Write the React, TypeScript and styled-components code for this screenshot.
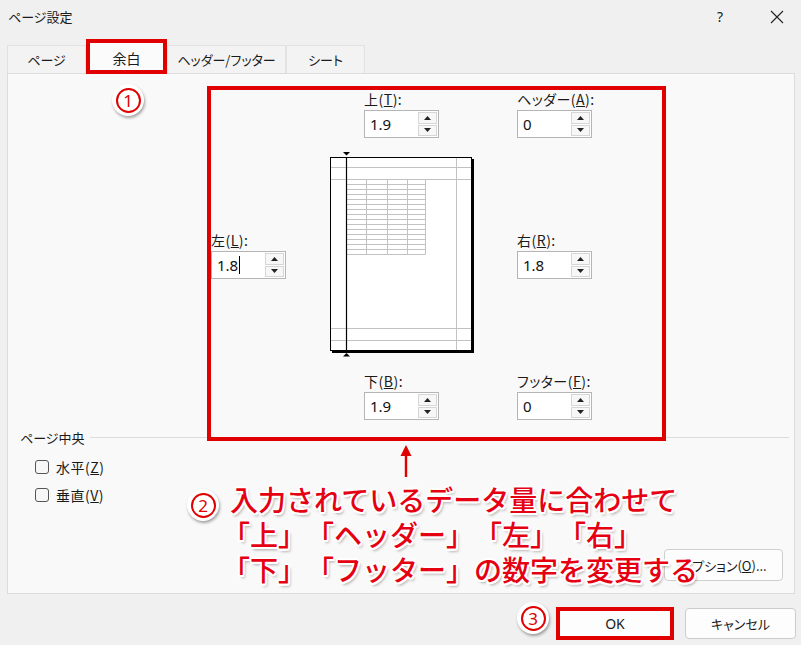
import React from "react";
import styled, { createGlobalStyle } from "styled-components";

const RED = "#e00000";

const GlobalStyle = createGlobalStyle`
  html, body {
    margin: 0;
    padding: 0;
    background: #f0f0f0;
  }
  body {
    font-family: "Noto Sans CJK JP", "Noto Sans", sans-serif;
    color: #1a1a1a;
  }
`;

const Dialog = styled.div`
  position: relative;
  width: 801px;
  height: 645px;
  background: #f0f0f0;
  display: flex;
  flex-direction: column;
  font-size: 13px;
  font-feature-settings: "palt";
  overflow: hidden;
`;

const TitleBar = styled.div`
  height: 33px;
  display: flex;
  align-items: center;
  padding-left: 8px;
`;

const Title = styled.span`
  flex: 1;
  font-size: 13px;
`;

const TitleButton = styled.div<{ $w: number }>`
  width: ${(p) => p.$w}px;
  height: 33px;
  display: flex;
  align-items: center;
  justify-content: center;
  font-family: "Noto Sans", sans-serif;
  font-size: 14px;
`;

const TabStrip = styled.div`
  height: 40px;
  display: flex;
  align-items: flex-end;
  padding-left: 7px;
  position: relative;
  z-index: 2;
`;

const Tab = styled.div<{ $w: number; $active?: boolean }>`
  box-sizing: border-box;
  width: ${(p) => p.$w}px;
  height: ${(p) => (p.$active ? 35 : 28)}px;
  margin-bottom: ${(p) => (p.$active ? -1 : 0)}px;
  display: flex;
  align-items: center;
  justify-content: center;
  padding-top: ${(p) => (p.$active ? 2 : 0)}px;
  background: ${(p) => (p.$active ? "#fbfbfb" : "#f3f3f3")};
  border: ${(p) => (p.$active ? `4px solid ${RED}` : "1px solid #e2e2e2")};
  border-bottom: ${(p) => (p.$active ? `4px solid ${RED}` : "none")};
  font-size: ${(p) => (p.$active ? 14 : 13)}px;
`;

const Panel = styled.div`
  box-sizing: border-box;
  margin-left: 7px;
  width: 788px;
  height: 521px;
  border: 1px solid #dcdcdc;
  background: #f9f9f9;
  display: flex;
  flex-direction: column;
  padding: 16px 0 12px 0;
`;

const MarginEditor = styled.div`
  margin-left: 203px;
  display: grid;
  grid-template-columns: 75px 78px 153px 75px;
  grid-template-rows: 48px 196px 48px;
  row-gap: 19px;
`;

const Field = styled.div<{ $col: number; $row: number }>`
  grid-column: ${(p) => p.$col};
  grid-row: ${(p) => p.$row};
  align-self: center;
  display: flex;
  flex-direction: column;
`;

const FieldLabel = styled.div`
  height: 18px;
  line-height: 18px;
  margin-bottom: 2px;
  white-space: nowrap;
  font-size: 14px;
  letter-spacing: 0.5px;
`;

const SpinBox = styled.div`
  box-sizing: border-box;
  width: 75px;
  height: 28px;
  border: 1px solid #b5b5b5;
  background: #fff;
  display: flex;
  align-items: stretch;
`;

const SpinValue = styled.div`
  flex: 1;
  display: flex;
  align-items: center;
  padding-left: 5px;
  font-family: "Noto Sans", sans-serif;
  font-size: 15px;
  color: #111;
`;

const Caret = styled.span`
  display: inline-block;
  width: 1px;
  height: 18px;
  background: #000;
  margin-left: 1px;
`;

const SpinButtons = styled.div`
  width: 19px;
  margin: 1px 1px 1px 0;
  display: flex;
  flex-direction: column;
  gap: 1px;
`;

const SpinButton = styled.div`
  flex: 1;
  box-sizing: border-box;
  border: 1px solid #d6d6d6;
  background: #f7f7f7;
  display: flex;
  align-items: center;
  justify-content: center;
`;

const PreviewCell = styled.div`
  grid-column: 2 / 4;
  grid-row: 2;
  margin-left: 44px;
`;

const CenterGroup = styled.div`
  margin-top: 8px;
  padding-left: 12px;
  display: flex;
  flex-direction: column;
`;

const Legend = styled.div`
  height: 18px;
  display: flex;
  align-items: center;
  gap: 5px;
  margin-right: 5px;
`;

const LegendLine = styled.div`
  flex: 1;
  height: 1px;
  background: #dcdcdc;
`;

const CheckRow = styled.label<{ $first?: boolean }>`
  height: 18px;
  margin-left: 15px;
  margin-top: ${(p) => (p.$first ? 12 : 10)}px;
  display: flex;
  align-items: center;
  gap: 7px;
  font-size: 14px;
  letter-spacing: 0.5px;
`;

const CheckBox = styled.span`
  box-sizing: border-box;
  width: 14px;
  height: 14px;
  border: 1px solid #555;
  border-radius: 3px;
  background: #f7f7f7;
`;

const Spacer = styled.div`
  flex: 1;
`;

const OptionButton = styled.div`
  box-sizing: border-box;
  align-self: flex-end;
  margin-right: 11px;
  width: 119px;
  height: 32px;
  border: 1px solid #cfcfcf;
  border-radius: 4px;
  background: #fdfdfd;
  display: flex;
  align-items: center;
  justify-content: center;
`;

const ButtonRow = styled.div`
  display: flex;
  justify-content: flex-end;
  align-items: center;
  gap: 11px;
  padding-right: 5px;
  margin-top: 13px;
`;

const DialogButton = styled.div<{ $highlight?: boolean }>`
  box-sizing: border-box;
  width: ${(p) => (p.$highlight ? 118 : 111)}px;
  height: ${(p) => (p.$highlight ? 33 : 31)}px;
  border: ${(p) => (p.$highlight ? `4px solid ${RED}` : "1px solid #cccccc")};
  border-radius: ${(p) => (p.$highlight ? 0 : 4)}px;
  background: #fdfdfd;
  display: flex;
  align-items: center;
  justify-content: center;
  font-size: 13px;
`;

const OkText = styled.span`
  font-family: "Noto Sans", sans-serif;
  font-size: 14px;
`;

/* annotations on top of the dialog */

const RedFrame = styled.div`
  position: absolute;
  left: 207px;
  top: 86px;
  width: 459px;
  height: 355px;
  box-sizing: border-box;
  border: 4px solid ${RED};
  pointer-events: none;
`;

const Badge = styled.div<{ $x: number; $y: number }>`
  position: absolute;
  left: ${(p) => p.$x}px;
  top: ${(p) => p.$y}px;
  width: 32px;
  height: 32px;
  border-radius: 50%;
  background: #fff;
  box-shadow: 1px 2px 3px rgba(0, 0, 0, 0.35);
  display: flex;
  align-items: center;
  justify-content: center;
  z-index: 5;
`;

const BadgeRing = styled.div`
  box-sizing: border-box;
  width: 25px;
  height: 25px;
  border-radius: 50%;
  border: 2px solid ${RED};
  color: ${RED};
  font-family: "Noto Sans", sans-serif;
  font-size: 17px;
  line-height: 1;
  display: flex;
  align-items: center;
  justify-content: center;
`;

const Note = styled.div`
  position: absolute;
  left: 230px;
  top: 482px;
  z-index: 5;
  color: #e50012;
  font-family: "Noto Sans CJK JP", sans-serif;
  font-feature-settings: normal;
  text-spacing-trim: space-all;
  font-weight: 500;
  font-size: 28px;
  line-height: 35px;
  white-space: nowrap;
  text-shadow: 2px 0 #fff, -2px 0 #fff, 0 2px #fff, 0 -2px #fff,
    1.5px 1.5px #fff, -1.5px -1.5px #fff, 1.5px -1.5px #fff,
    -1.5px 1.5px #fff, 2px 3px 3px rgba(0, 0, 0, 0.35);
`;

const NoteLine = styled.div<{ $indent?: number }>`
  margin-left: ${(p) => p.$indent ?? 0}px;
`;

const ArrowMark = styled.svg`
  position: absolute;
  left: 400px;
  top: 445px;
  z-index: 5;
`;

const SpinArrow = ({ up }: { up?: boolean }) => (
  <svg width="7" height="4" viewBox="0 0 7 4">
    <polygon points={up ? "0,4 7,4 3.5,0" : "0,0 7,0 3.5,4"} fill="#222" />
  </svg>
);

const Spinner = ({ value, caret }: { value: string; caret?: boolean }) => (
  <SpinBox>
    <SpinValue>
      {value}
      {caret && <Caret />}
    </SpinValue>
    <SpinButtons>
      <SpinButton>
        <SpinArrow up />
      </SpinButton>
      <SpinButton>
        <SpinArrow />
      </SpinButton>
    </SpinButtons>
  </SpinBox>
);

const MarginField = ({
  label,
  accel,
  value,
  col,
  row,
  caret,
}: {
  label: string;
  accel: string;
  value: string;
  col: number;
  row: number;
  caret?: boolean;
}) => (
  <Field $col={col} $row={row}>
    <FieldLabel>
      {label}(<u>{accel}</u>):
    </FieldLabel>
    <Spinner value={value} caret={caret} />
  </Field>
);

const PagePreview = () => {
  const rows = Array.from({ length: 16 }, (_, i) => 22.5 + i * 5);
  const cols = [16.5, 36.5, 57.5, 77.5, 95.5];
  return (
    <svg width="145" height="196" viewBox="0 0 145 196" style={{ overflow: "visible", display: "block" }}>
      <rect x="0" y="0" width="142" height="194" fill="#fff" />
      <rect x="142" y="2" width="2" height="194" fill="#000" />
      <rect x="2" y="194" width="142" height="2" fill="#000" />
      <g stroke="#c2c2c2" strokeWidth="1">
        <line x1="0" y1="10.5" x2="142" y2="10.5" />
        <line x1="0" y1="22.5" x2="142" y2="22.5" />
        <line x1="0" y1="171.5" x2="142" y2="171.5" />
        <line x1="0" y1="183.5" x2="142" y2="183.5" />
        <line x1="126.5" y1="0" x2="126.5" y2="194" />
        {rows.map((y) => (
          <line key={y} x1="16.5" y1={y} x2="95.5" y2={y} />
        ))}
        {cols.map((x) => (
          <line key={x} x1={x} y1="22.5" x2={x} y2="97.5" />
        ))}
      </g>
      <rect x="0.5" y="0.5" width="141" height="193" fill="none" stroke="#000" />
      <line x1="16.5" y1="0" x2="16.5" y2="194" stroke="#000" strokeWidth="1.2" />
      <polygon points="13,-5 20,-5 16.5,-1.5" fill="#000" />
      <polygon points="13,199.5 20,199.5 16.5,196" fill="#000" />
    </svg>
  );
};

export default function App() {
  return (
    <>
      <GlobalStyle />
      <Dialog>
        <TitleBar>
          <Title>ページ設定</Title>
          <TitleButton $w={66}>?</TitleButton>
          <TitleButton $w={48}>
            <svg width="14" height="14" viewBox="0 0 14 14">
              <path d="M1 1 L13 13 M13 1 L1 13" stroke="#222" strokeWidth="1.1" />
            </svg>
          </TitleButton>
        </TitleBar>

        <TabStrip>
          <Tab $w={79}>ページ</Tab>
          <Tab $w={81} $active>
            余白
          </Tab>
          <Tab $w={119}>ヘッダー/フッター</Tab>
          <Tab $w={79}>シート</Tab>
        </TabStrip>

        <Panel>
          <MarginEditor>
            <MarginField label="上" accel="T" value="1.9" col={3} row={1} />
            <MarginField label="ヘッダー" accel="A" value="0" col={4} row={1} />
            <MarginField label="左" accel="L" value="1.8" col={1} row={2} caret />
            <PreviewCell>
              <PagePreview />
            </PreviewCell>
            <MarginField label="右" accel="R" value="1.8" col={4} row={2} />
            <MarginField label="下" accel="B" value="1.9" col={3} row={3} />
            <MarginField label="フッター" accel="F" value="0" col={4} row={3} />
          </MarginEditor>

          <CenterGroup>
            <Legend>
              ページ中央
              <LegendLine />
            </Legend>
            <CheckRow $first>
              <CheckBox />
              <span>
                水平(<u>Z</u>)
              </span>
            </CheckRow>
            <CheckRow>
              <CheckBox />
              <span>
                垂直(<u>V</u>)
              </span>
            </CheckRow>
          </CenterGroup>

          <Spacer />
          <OptionButton>
            オプション(<u>O</u>)...
          </OptionButton>
        </Panel>

        <ButtonRow>
          <DialogButton $highlight>
            <OkText>OK</OkText>
          </DialogButton>
          <DialogButton>キャンセル</DialogButton>
        </ButtonRow>

        <RedFrame />
        <Badge $x={112} $y={84}>
          <BadgeRing>1</BadgeRing>
        </Badge>
        <Badge $x={187} $y={489}>
          <BadgeRing>2</BadgeRing>
        </Badge>
        <Badge $x={517} $y={602}>
          <BadgeRing>3</BadgeRing>
        </Badge>

        <ArrowMark width="12" height="32" viewBox="0 0 12 32">
          <polygon points="6,0 11.5,11 0.5,11" fill={RED} />
          <rect x="4.8" y="10" width="2.4" height="22" fill={RED} />
        </ArrowMark>

        <Note>
          <NoteLine>入力されているデータ量に合わせて</NoteLine>
          <NoteLine $indent={-8}>「上」「ヘッダー」「左」「右」</NoteLine>
          <NoteLine $indent={-8}>「下」「フッター」の数字を変更する</NoteLine>
        </Note>
      </Dialog>
    </>
  );
}
